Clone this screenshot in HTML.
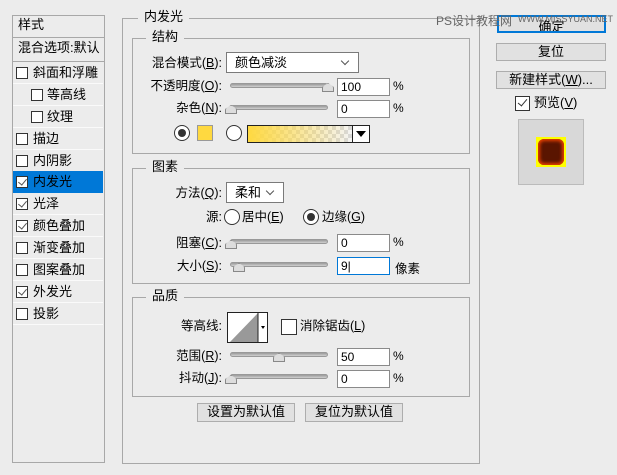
<!DOCTYPE html>
<html><head><meta charset="utf-8"><style>
*{margin:0;padding:0;box-sizing:border-box}
body{width:617px;height:475px;background:#ececec;font-family:"Liberation Sans","Noto Sans CJK SC",sans-serif;font-size:12px;color:#000;position:relative;overflow:hidden}
.a{position:absolute;white-space:nowrap}
.box{position:absolute;border:1px solid #a8a8a8}
.leg{position:absolute;background:#ececec;padding:0 6px;font-size:13px;line-height:16px}
.row{position:absolute;left:13px;width:90px;height:22px;border-bottom:1px solid #fafafa;line-height:21px;padding-left:20px;font-size:13px}
.cb{position:absolute;width:12px;height:12px;border:1px solid #333;background:#fff;top:5px;left:3px}
.cb.k::after{content:"";position:absolute;left:3px;top:0px;width:4px;height:7px;border:solid #555;border-width:0 1px 1px 0;transform:rotate(40deg)}
.lbl{position:absolute;text-align:right;font-size:12.5px;line-height:16px}
.inp{position:absolute;background:#fff;border:1px solid #8a8a8a;height:18px;width:53px;padding-left:3px;line-height:16px;font-size:12px}
.sl{position:absolute;height:5px;border-radius:3px;background:linear-gradient(#9a9a9a,#d0d0d0);border:1px solid #999}
.th{position:absolute;width:12px;height:9px;background:#ddd;border:1px solid #888;border-radius:5px 5px 0 0;clip-path:polygon(50% 0,100% 45%,100% 100%,0 100%,0 45%)}
.btn{position:absolute;border:1px solid #adadad;background:#e1e1e1;text-align:center;font-size:13px;line-height:16px}
.rad{position:absolute;width:16px;height:16px;border-radius:50%;border:1px solid #333;background:#fff}
.sel{position:absolute;background:#fff;border:1px solid #7a7a7a;height:21px;line-height:19px;padding-left:8px;font-size:13px}
.sel::after{content:"";position:absolute;right:10px;top:5px;width:5px;height:5px;border:solid #555;border-width:0 1px 1px 0;transform:rotate(45deg)}
</style></head><body>

<div class="box" style="left:12px;top:15px;width:93px;height:448px;background:#ececec"></div>
<div class="a" style="left:18px;top:16px;font-size:13px;line-height:17px">样式</div>
<div class="a" style="left:13px;top:37px;width:91px;border-top:1px solid #a8a8a8"></div>
<div class="a" style="left:18px;top:39px;font-size:13px;line-height:17px">混合选项:默认</div>
<div class="a" style="left:13px;top:61px;width:91px;border-top:1px solid #a8a8a8"></div>
<div class="row" style="top:62px"><span class="cb"></span>斜面和浮雕</div>
<div class="row" style="top:84px;padding-left:34px"><span class="cb" style="left:18px"></span>等高线</div>
<div class="row" style="top:106px;padding-left:34px"><span class="cb" style="left:18px"></span>纹理</div>
<div class="row" style="top:128px"><span class="cb"></span>描边</div>
<div class="row" style="top:150px"><span class="cb"></span>内阴影</div>
<div class="row" style="top:171px;background:#0078d7;border-bottom-color:#0078d7"><span class="cb k"></span>内发光</div>
<div class="row" style="top:193px"><span class="cb k"></span>光泽</div>
<div class="row" style="top:215px"><span class="cb k"></span>颜色叠加</div>
<div class="row" style="top:237px"><span class="cb"></span>渐变叠加</div>
<div class="row" style="top:259px"><span class="cb"></span>图案叠加</div>
<div class="row" style="top:281px"><span class="cb k"></span>外发光</div>
<div class="row" style="top:303px"><span class="cb"></span>投影</div>

<div class="box" style="left:122px;top:18px;width:358px;height:446px"></div>
<div class="leg" style="left:138px;top:9px">内发光</div>

<div class="box" style="left:132px;top:38px;width:338px;height:116px"></div>
<div class="leg" style="left:146px;top:29px">结构</div>
<div class="lbl" style="left:140px;width:82px;top:55px">混合模式(<u>B</u>):</div>
<div class="sel" style="left:226px;top:52px;width:133px">颜色减淡</div>
<div class="lbl" style="left:140px;width:82px;top:78px">不透明度(<u>O</u>):</div>
<div class="sl" style="left:230px;top:83px;width:98px"></div><div class="th" style="left:322px;top:83px"></div>
<div class="inp" style="left:337px;top:78px">100</div><div class="a" style="left:393px;top:79px">%</div>
<div class="lbl" style="left:140px;width:82px;top:100px">杂色(<u>N</u>):</div>
<div class="sl" style="left:230px;top:105px;width:98px"></div><div class="th" style="left:225px;top:105px"></div>
<div class="inp" style="left:337px;top:100px">0</div><div class="a" style="left:393px;top:101px">%</div>
<div class="rad" style="left:174px;top:125px"><div style="position:absolute;left:3px;top:3px;width:8px;height:8px;border-radius:50%;background:#333"></div></div>
<div class="a" style="left:197px;top:125px;width:16px;height:16px;background:#ffd940;border:1px solid #999"></div>
<div class="rad" style="left:226px;top:125px"></div>
<div class="a" style="left:247px;top:125px;width:106px;height:18px;border:1px solid #222;background:linear-gradient(90deg,#ffd940,rgba(255,217,64,0)),repeating-conic-gradient(#d8d8d8 0 25%,#f4f4f4 0 50%) 0 0/8px 8px"></div>
<div class="a" style="left:352px;top:125px;width:18px;height:18px;border:1px solid #222;background:#fff"><div style="position:absolute;left:3px;top:5px;border-left:5px solid transparent;border-right:5px solid transparent;border-top:6px solid #000"></div></div>

<div class="box" style="left:132px;top:168px;width:338px;height:116px"></div>
<div class="leg" style="left:146px;top:159px">图素</div>
<div class="lbl" style="left:140px;width:82px;top:185px">方法(<u>Q</u>):</div>
<div class="sel" style="left:226px;top:182px;width:58px">柔和</div>
<div class="lbl" style="left:140px;width:82px;top:209px">源:</div>
<div class="rad" style="left:224px;top:209px"></div><div class="a" style="left:242px;top:209px;font-size:12.5px;line-height:16px">居中(<u>E</u>)</div>
<div class="rad" style="left:303px;top:209px"><div style="position:absolute;left:3px;top:3px;width:8px;height:8px;border-radius:50%;background:#333"></div></div><div class="a" style="left:322px;top:209px;font-size:12.5px;line-height:16px">边缘(<u>G</u>)</div>
<div class="lbl" style="left:140px;width:82px;top:235px">阻塞(<u>C</u>):</div>
<div class="sl" style="left:230px;top:239px;width:98px"></div><div class="th" style="left:225px;top:240px"></div>
<div class="inp" style="left:337px;top:234px">0</div><div class="a" style="left:393px;top:235px">%</div>
<div class="lbl" style="left:140px;width:82px;top:258px">大小(<u>S</u>):</div>
<div class="sl" style="left:230px;top:262px;width:98px"></div><div class="th" style="left:233px;top:263px"></div>
<div class="inp" style="left:337px;top:257px;border-color:#0078d7">9|</div><div class="a" style="left:395px;top:258px;font-size:12.5px">像素</div>

<div class="box" style="left:132px;top:297px;width:338px;height:100px"></div>
<div class="leg" style="left:146px;top:288px">品质</div>
<div class="lbl" style="left:140px;width:82px;top:318px">等高线:</div>
<div class="a" style="left:227px;top:312px;width:41px;height:31px;border:1px solid #222;background:#fff">
<svg width="39" height="29" style="position:absolute;left:0;top:0"><polygon points="2,29 30,0 30,29" fill="#999"/><line x1="30" y1="0" x2="30" y2="29" stroke="#222"/><polygon points="33,13 37,13 35,16" fill="#000"/></svg></div>
<div class="a" style="left:281px;top:319px;width:16px;height:16px;border:1px solid #333;background:#fff"></div>
<div class="a" style="left:300px;top:318px;font-size:12.5px;line-height:16px">消除锯齿(<u>L</u>)</div>
<div class="lbl" style="left:140px;width:82px;top:348px">范围(<u>R</u>):</div>
<div class="sl" style="left:230px;top:352px;width:98px"></div><div class="th" style="left:273px;top:353px"></div>
<div class="inp" style="left:337px;top:348px">50</div><div class="a" style="left:393px;top:349px">%</div>
<div class="lbl" style="left:140px;width:82px;top:370px">抖动(<u>J</u>):</div>
<div class="sl" style="left:230px;top:374px;width:98px"></div><div class="th" style="left:225px;top:375px"></div>
<div class="inp" style="left:337px;top:370px">0</div><div class="a" style="left:393px;top:371px">%</div>

<div class="btn" style="left:197px;top:403px;width:98px;height:19px">设置为默认值</div>
<div class="btn" style="left:305px;top:403px;width:98px;height:19px">复位为默认值</div>

<div class="btn" style="left:497px;top:15px;width:109px;height:18px;border:2px solid #0078d7;line-height:14px;overflow:hidden"><span style="position:relative;top:3px">确定</span></div>
<div class="a" style="left:436px;top:12px;font-size:12px;color:#666">PS设计教程网</div>
<div class="a" style="left:518px;top:14px;font-size:9px;color:#666">WWW.MISSYUAN.NET</div>
<div class="btn" style="left:496px;top:43px;width:110px;height:18px">复位</div>
<div class="btn" style="left:496px;top:71px;width:110px;height:18px">新建样式(<u>W</u>)...</div>
<div class="a" style="left:515px;top:96px;width:15px;height:15px;border:1px solid #333;background:#fff"><div style="position:absolute;left:4px;top:0;width:5px;height:9px;border:solid #333;border-width:0 1.5px 1.5px 0;transform:rotate(40deg)"></div></div>
<div class="a" style="left:534px;top:95px;font-size:13px;line-height:16px">预览(<u>V</u>)</div>
<div class="a" style="left:518px;top:119px;width:66px;height:66px;border:1px solid #bbb;background:#d8d8d8">
<div style="position:absolute;left:17px;top:17px;width:30px;height:30px;background:#ff0;"><div style="position:absolute;left:2px;top:2px;width:26px;height:26px;border-radius:6px;background:#5a1500;box-shadow:inset 0 0 3px 2px #e84000"></div></div></div>
</body></html>
